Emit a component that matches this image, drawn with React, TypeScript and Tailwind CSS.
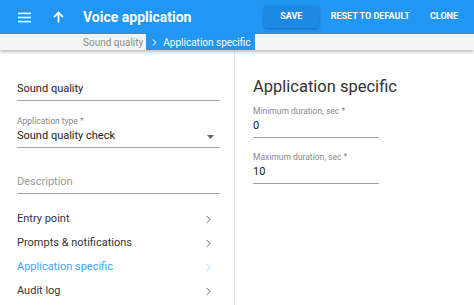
import { ChevronRight } from "lucide-react";

function Field({ label, value, placeholder, select, width }: { label?: string; value?: string; placeholder?: string; select?: boolean; width: string }) {
    return (
        <div className={`${width} border-b border-[#9e9e9e]`}>
            {label && <div className="text-[8.5px] leading-[9px] text-[#8a8a8a]">{label}</div>}
            <div className="flex items-center justify-between h-[21px]">
                <span className={`text-[11px] ${placeholder ? "text-[#9a9a9a]" : "text-[#222]"}`}>{value ?? placeholder}</span>
                {select && (
                    <svg width="7" height="4" viewBox="0 0 7 4" className="mr-[6px]">
                        <path d="M0 0 L7 0 L3.5 4 Z" fill="#666" />
                    </svg>
                )}
            </div>
        </div>
    );
}

function NavItem({ text, active }: { text: string; active?: boolean }) {
    return (
        <div className={`flex items-center justify-between h-[24px] ${active ? "text-[#42a5f5]" : "text-[#333]"}`}>
            <span className="text-[11px]">{text}</span>
            <ChevronRight size={13} strokeWidth={1.6} className={`mr-[5px] ${active ? "text-[#90caf9]" : "text-[#555]"}`} />
        </div>
    );
}

export default function App() {
    return (
        <div className="w-[474px] h-[305px] bg-white overflow-hidden flex flex-col" style={{ fontFamily: "Roboto, 'Liberation Sans', sans-serif" }}>
            {/* Header */}
            <header className="h-[34px] bg-[#2196f3] flex items-center text-white shrink-0">
                <svg width="13" height="11" viewBox="0 0 13 11" className="ml-[18px]">
                    <rect x="0" y="0.6" width="13" height="1.6" fill="white" />
                    <rect x="0" y="4.7" width="13" height="1.6" fill="white" />
                    <rect x="0" y="8.8" width="13" height="1.6" fill="white" />
                </svg>
                <svg width="11" height="12" viewBox="0 0 11 12" className="ml-[22px]">
                    <path d="M5.5 11.5 V1.5 M1 6 L5.5 1.5 L10 6" stroke="white" strokeWidth="1.8" fill="none" />
                </svg>
                <h1 className="ml-[19px] text-[14px] font-bold">Voice application</h1>
                <div className="ml-auto flex items-center h-full text-[9px] font-bold mr-[16px]">
                    <button className="h-[22px] w-[55px] bg-[#1e88e5] shadow-[0_1px_3px_rgba(0,0,0,0.3)] rounded-[2px]">SAVE</button>
                    <button className="h-[22px] ml-[12px]">RESET TO DEFAULT</button>
                    <button className="h-[22px] ml-[20px]">CLONE</button>
                </div>
            </header>

            {/* Breadcrumbs */}
            <div className="h-[16px] bg-[#f5f5f5] flex items-center shrink-0 shadow-[0_2px_3px_rgba(0,0,0,0.25)] relative z-10">
                <span className="ml-[83px] text-[10px] text-[#8d8d8d] pr-[3px]">Sound quality</span>
                <div className="h-full bg-[#2196f3] flex items-center text-white text-[10px] pl-[3px] pr-[4px]">
                    <ChevronRight size={11} strokeWidth={2.2} className="mr-[3px]" />
                    <span>Application specific</span>
                </div>
            </div>

            {/* Body */}
            <div className="flex flex-1">
                <div className="w-[235px] border-r border-[#e3e3e3] pl-[17px] pr-[15px] pt-[29px]">
                    <Field value="Sound quality" width="w-[203px]" />
                    <div className="mt-[16px]">
                        <Field label="Application type *" value="Sound quality check" select width="w-[203px]" />
                    </div>
                    <div className="mt-[24px]">
                        <Field placeholder="Description" width="w-[203px]" />
                    </div>
                    <div className="mt-[13px] w-[203px]">
                        <NavItem text="Entry point" />
                        <NavItem text="Prompts & notifications" />
                        <NavItem text="Application specific" active />
                        <NavItem text="Audit log" />
                    </div>
                </div>
                <div className="flex-1 pl-[18px] pt-[26px]">
                    <h2 className="text-[16.5px] text-[#333] leading-[22px]">Application specific</h2>
                    <div className="mt-[9px]">
                        <Field label="Minimum duration, sec *" value="0" width="w-[126px]" />
                    </div>
                    <div className="mt-[15px]">
                        <Field label="Maximum duration, sec *" value="10" width="w-[126px]" />
                    </div>
                </div>
            </div>
        </div>
    );
}
